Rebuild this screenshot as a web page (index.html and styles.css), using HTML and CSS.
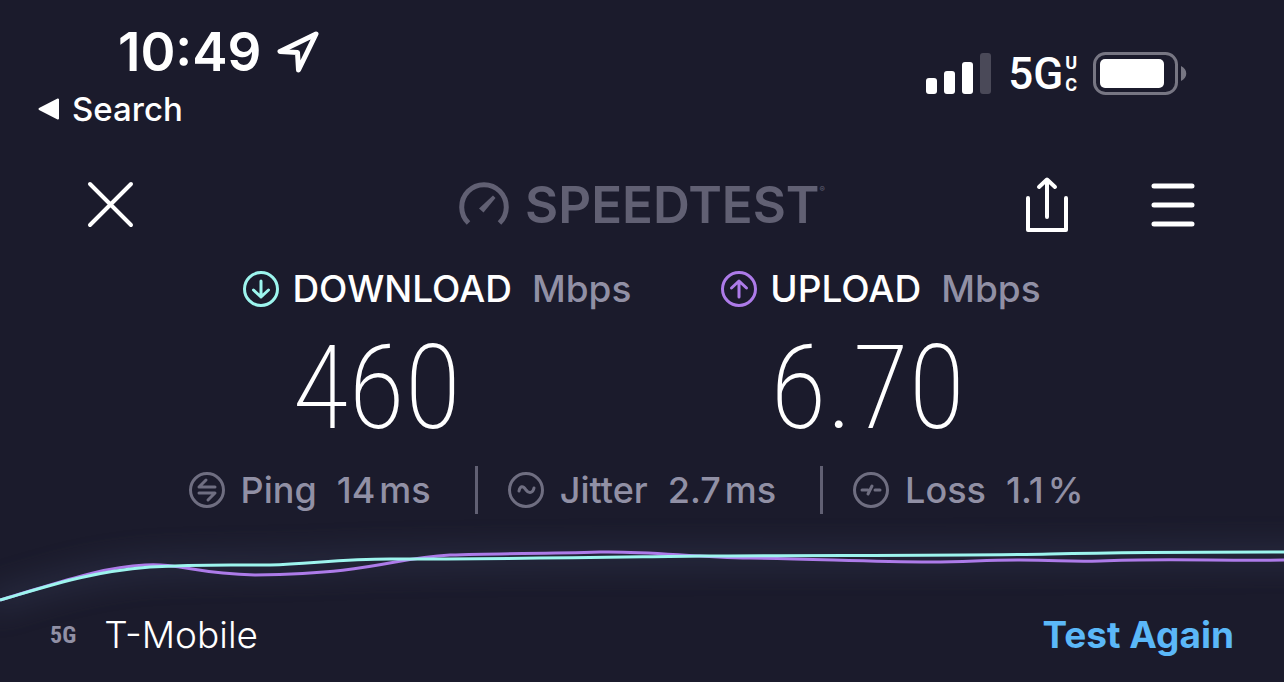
FILE: index.html
```html
<!DOCTYPE html>
<html lang="en">
<head>
    <meta charset="UTF-8">
    <meta name="viewport" content="width=device-width, initial-scale=1.0">
    <title>Speedtest</title>
    <link rel="stylesheet" href="styles.css">
</head>
<body>
    <div class="status-bar">
        <div class="status-left">
            <div class="clock">
                <span>10:49</span>
                <svg width="44" height="44" viewBox="0 0 44 44" fill="none" stroke="#fff" stroke-width="5" stroke-linejoin="round">
                    <path d="M40 4 L4 21.500 L21.500 22.500 L22.500 40 Z"/>
                </svg>
            </div>
            <a class="back" href="#">
                <svg width="22" height="22" viewBox="0 0 22 22" fill="#fff" stroke="#fff" stroke-width="2" stroke-linejoin="round">
                    <path d="M1.500 11 L20 1.500 V20.500 Z"/>
                </svg>
                <span>Search</span>
            </a>
        </div>
        <div class="status-right">
            <svg width="66" height="42" viewBox="0 0 66 42" fill="#fff">
                <rect x="0" y="25" width="11" height="16" rx="3"/>
                <rect x="18" y="18" width="11" height="23" rx="3"/>
                <rect x="36" y="9" width="11" height="32" rx="3"/>
                <rect x="54" y="0" width="11" height="41" rx="3" fill="#4a4958"/>
            </svg>
            <div class="network">
                <span>5G</span>
                <span class="network-type"><span>U</span><span>C</span></span>
            </div>
            <svg width="94" height="44" viewBox="0 0 94 44">
                <rect x="1.500" y="1.500" width="82" height="40" rx="11" fill="none" stroke="#777683" stroke-width="3"/>
                <rect x="7" y="7" width="64" height="29" rx="5" fill="#fff"/>
                <path d="M88 14 C95 17 95 26 88 29 Z" fill="#777683"/>
            </svg>
        </div>
    </div>

    <header class="header">
        <button type="button" class="icon-btn" aria-label="Close">
            <svg width="46" height="46" viewBox="0 0 46 46" stroke="#fff" stroke-width="4" stroke-linecap="round">
                <path d="M2 2 L43 43 M43 2 L2 43"/>
            </svg>
        </button>
        <div class="logo">
            <svg width="50" height="44" viewBox="0 0 50 44">
                <path d="M9.500 40 A22.300 22.300 0 1 1 40.500 40" fill="none" stroke="#616073" stroke-width="5"/>
                <path d="M34 12.500 L36.500 15 L24.500 29.500 L20 25.500 Z" fill="#616073"/>
            </svg>
            <span class="logo-text">SPEEDTEST</span>
            <sup>®</sup>
        </div>
        <div class="actions">
            <button type="button" class="icon-btn" aria-label="Share">
                <svg width="42" height="56" viewBox="0 0 42 56" fill="none" stroke="#fff" stroke-width="4" stroke-linecap="round" stroke-linejoin="round">
                    <path d="M2 21 V53 H40 V21 M21 40 V3 M13 10 L21 2.500 L29 10"/>
                </svg>
            </button>
            <button type="button" class="icon-btn" aria-label="Menu">
                <svg width="44" height="46" viewBox="0 0 44 46" stroke="#fff" stroke-width="5" stroke-linecap="round">
                    <path d="M2 4 H40 M2 23 H40 M2 42 H40"/>
                </svg>
            </button>
        </div>
    </header>

    <main>
        <section class="results">
            <div class="result">
                <svg class="download" width="36" height="36" viewBox="0 0 36 36">
                    <circle cx="18" cy="18" r="16.500"/>
                    <path d="M18 10 V26 M10.500 19 L18 26 L25.500 19"/>
                </svg>
                <h2>DOWNLOAD <small>Mbps</small></h2>
                <p class="speed">460</p>
            </div>
            <div class="result">
                <svg class="upload" width="36" height="36" viewBox="0 0 36 36">
                    <circle cx="18" cy="18" r="16.500"/>
                    <path d="M18 26 V10 M10.500 17 L18 10 L25.500 17"/>
                </svg>
                <h2>UPLOAD <small>Mbps</small></h2>
                <p class="speed">6.70</p>
            </div>
        </section>

        <section class="stats">
            <div class="stat">
                <svg width="36" height="36" viewBox="0 0 36 36">
                    <circle cx="18" cy="18" r="16.500"/>
                    <path d="M26 15 H10 L17 8 M10 21 H26 L19 28"/>
                </svg>
                <span>Ping</span>
                <span class="value">14<span>ms</span></span>
            </div>
            <div class="stat">
                <svg width="36" height="36" viewBox="0 0 36 36">
                    <circle cx="18" cy="18" r="16.500"/>
                    <path d="M11 19 C12 14 15 13 18 18 C21 22 25 21 26 16"/>
                </svg>
                <span>Jitter</span>
                <span class="value">2.7<span>ms</span></span>
            </div>
            <div class="stat">
                <svg width="36" height="36" viewBox="0 0 36 36">
                    <circle cx="18" cy="18" r="16.500"/>
                    <path d="M9 18 H15 M15 22 L19 14 M22 18 H27"/>
                </svg>
                <span>Loss</span>
                <span class="value">1.1<span>%</span></span>
            </div>
        </section>

        <svg class="chart" viewBox="0 0 1284 80" preserveAspectRatio="none">
            <defs>
                <filter id="glow" filterUnits="userSpaceOnUse" x="-60" y="-60" width="1404" height="200">
                    <feGaussianBlur stdDeviation="14"/>
                </filter>
            </defs>
            <path class="glow" filter="url(#glow)" d="M-10 76 L0 71 C50 56 90 43 150 38 C240 34 280 36 350 32 C500 28 700 28 900 28 S1200 26 1330 26"/>
            <path class="upload" d="M0 71 C55 55 100 38 145 36 C180 34 195 45 255 46 C380 44 390 29 450 26 C500 24 540 25 600 23 C650 22 690 28 750 29 C820 30 870 33 930 33 C970 33 980 31 1020 31 C1060 31 1065 33 1100 32 C1160 29 1220 32 1284 31"/>
            <path class="download" d="M0 71 C55 55 90 43 150 38 C200 35 220 36 270 36 C310 35 340 30 390 30 C520 30 620 28 700 27 C820 26 950 27 1050 25 C1140 23 1200 23 1284 23"/>
        </svg>
    </main>

    <footer class="footer">
        <div class="carrier">
            <span class="tech">5G</span>
            <span>T-Mobile</span>
        </div>
        <button type="button" class="test-again">Test Again</button>
    </footer>
</body>
</html>
```

FILE: styles.css
```css
* {
    box-sizing: border-box;
}
body {
    margin: 0;
    background-color: #1b1b2c;
    color: #fff;
    font-family: Inter, "Liberation Sans", sans-serif;
    font-size: 37px;
    line-height: 44px;
}
svg {
    display: block;
    flex-shrink: 0;
    overflow: visible;
}
button {
    padding: 0;
    border: none;
    background: none;
    color: inherit;
    font: inherit;
    cursor: pointer;
}
h2, p {
    margin: 0;
}

/* Phone status bar */
.status-bar {
    display: flex;
    justify-content: space-between;
    padding: 24px 97px 0 38px;
}
.clock {
    display: flex;
    align-items: center;
    gap: 15px;
    padding-left: 80px;
    font-size: 53px;
    font-weight: 600;
    line-height: 56px;
}
.back {
    display: flex;
    align-items: center;
    gap: 12px;
    margin-top: 7px;
    color: #fff;
    font-size: 33px;
    font-weight: 500;
    text-decoration: none;
}
.status-right {
    display: flex;
    align-items: center;
    align-self: flex-start;
    gap: 16px;
    padding-top: 28px;
}
.network {
    display: flex;
    align-items: center;
    gap: 2px;
    font-family: Roboto, sans-serif;
    font-size: 44px;
    font-weight: 500;
}
.network-type {
    display: flex;
    flex-direction: column;
    font-size: 18px;
    font-weight: 700;
    line-height: 22px;
}

/* Header */
.header {
    display: grid;
    grid-template-columns: 1fr auto 1fr;
    align-items: center;
    height: 80px;
    margin-top: 34px;
    padding: 0 88px;
}
.logo {
    display: flex;
    align-items: center;
    color: #616073;
}
.logo-text {
    margin-left: 16px;
    font-size: 51px;
    font-weight: 600;
}
.logo sup {
    align-self: flex-start;
    font-size: 8px;
    line-height: 12px;
}
.actions {
    display: flex;
    align-items: center;
    justify-content: flex-end;
    gap: 84px;
}

/* Download and upload */
.results {
    display: flex;
    justify-content: center;
    gap: 90px;
    margin-top: 22px;
}
.result {
    display: grid;
    grid-template-columns: 36px auto;
    column-gap: 13px;
    align-items: center;
}
.result svg, .stat svg {
    fill: none;
    stroke-width: 3;
    stroke-linecap: round;
    stroke-linejoin: round;
}
.result h2 {
    font-size: 37px;
    font-weight: 500;
}
.result small {
    margin-left: 10px;
    color: #9190a5;
    font-size: 37px;
}
.speed {
    grid-column: 2;
    font-family: "Roboto Condensed", "Open Sans Condensed", Roboto, sans-serif;
    font-size: 116px;
    font-weight: 200;
    line-height: 155px;
}
.download {
    stroke: #9df5ee;
}
.upload {
    stroke: #ad7be9;
}

/* Ping, jitter, loss */
.stats {
    display: flex;
    justify-content: center;
    padding-right: 12px;
    color: #9190a5;
    font-size: 36px;
    font-weight: 500;
}
.stat {
    display: flex;
    align-items: center;
    gap: 16px;
    height: 48px;
}
.stat + .stat {
    margin-left: 44px;
    padding-left: 30px;
    border-left: 3px solid #616073;
}
.stat svg {
    stroke: #6f6e81;
}
.value {
    margin-left: 4px;
}
.value span {
    margin-left: 4px;
}

/* Speed history */
.chart {
    width: 100%;
    height: 80px;
    margin-top: 15px;
    fill: none;
    stroke-width: 3;
}
.glow {
    stroke: #3c4560;
    stroke-width: 20;
    opacity: 0.4;
}

/* Carrier */
.footer {
    display: flex;
    justify-content: space-between;
    align-items: center;
    padding: 4px 50px 20px;
}
.carrier {
    display: flex;
    align-items: center;
    gap: 28px;
    font-weight: 300;
}
.tech {
    color: #9190a5;
    font-family: "Roboto Condensed", Roboto, sans-serif;
    font-size: 24px;
    font-weight: 700;
}
.test-again {
    color: #5bb8f8;
    font-weight: 700;
}
```
